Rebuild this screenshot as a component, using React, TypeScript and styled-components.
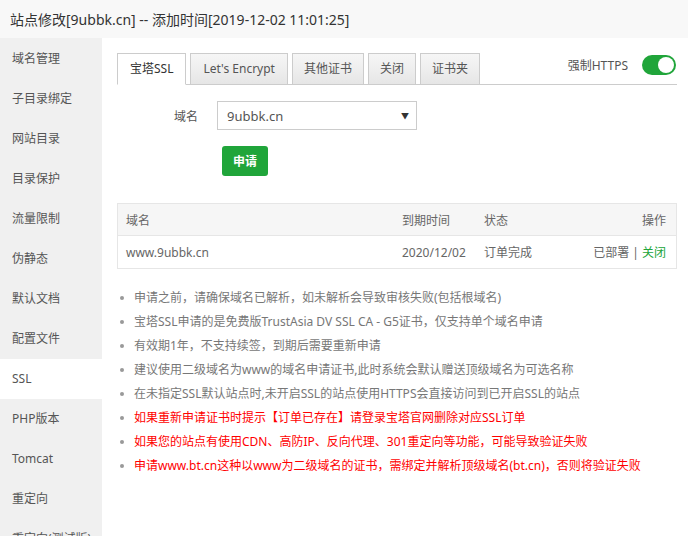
import React from "react";
import styled, { createGlobalStyle } from "styled-components";

const Global = createGlobalStyle`
  html, body { margin: 0; padding: 0; background: #fff; }
  body { font-family: "Segoe UI", "Noto Sans", "Noto Sans CJK SC", sans-serif; }
  * { box-sizing: border-box; }
`;

const Frame = styled.div`
  width: 688px;
  height: 536px;
  overflow: hidden;
  display: flex;
  flex-direction: column;
  background: #fff;
`;

const TitleBar = styled.div`
  height: 38px;
  flex: none;
  background: #f8f8f8;
  color: #333;
  font-size: 14px;
  line-height: 39px;
  padding-left: 10px;
  white-space: nowrap;
`;

const Body = styled.div`
  flex: 1;
  display: flex;
  min-height: 0;
`;

const Sidebar = styled.div`
  width: 102px;
  flex: none;
  background: #f0f0f0;
  display: flex;
  flex-direction: column;
  padding-top: 1px;
`;

const NavItem = styled.div<{ $active?: boolean }>`
  height: 40px;
  flex: none;
  line-height: 40px;
  padding-left: 12px;
  font-size: 12px;
  color: #555;
  white-space: nowrap;
  background: ${(p) => (p.$active ? "#fff" : "transparent")};
`;

const Content = styled.div`
  flex: 1;
  padding: 16px 11px 0 15px;
  display: flex;
  flex-direction: column;
`;

const TabBar = styled.div`
  height: 31px;
  display: flex;
  align-items: flex-end;
  border-bottom: 1px solid #ccc;
`;

const Tab = styled.div<{ $active?: boolean; $w: number }>`
  margin-right: 4px;
  padding: 0 ${(p) => p.$w}px;
  font-size: 12px;
  line-height: 30px;
  color: ${(p) => (p.$active ? "#333" : "#555")};
  border: 1px solid #ccc;
  border-bottom: ${(p) => (p.$active ? "1px solid #fff" : "none")};
  margin-bottom: ${(p) => (p.$active ? "-1px" : "0")};
  height: ${(p) => (p.$active ? "32px" : "31px")};
  background: ${(p) =>
    p.$active ? "#fff" : "linear-gradient(#f6f6f6, #e6e6e6)"};
  white-space: nowrap;
  display: flex;
  justify-content: center;
`;

const Spacer = styled.div`
  flex: 1;
`;

const ForceHttps = styled.div`
  display: flex;
  align-items: center;
  gap: 14px;
  align-self: stretch;
  padding-bottom: 9px;
  font-size: 12px;
  color: #555;
  margin-right: 1px;
`;

const Toggle = styled.div`
  width: 34px;
  height: 20px;
  border-radius: 10px;
  background: #20a53a;
  position: relative;
  &::after {
    content: "";
    position: absolute;
    right: 2px;
    top: 2px;
    width: 16px;
    height: 16px;
    border-radius: 50%;
    background: #fff;
  }
`;

const FormRow = styled.div`
  display: flex;
  align-items: center;
  margin-top: 16px;
`;

const Label = styled.div`
  width: 100px;
  padding-right: 19px;
  text-align: right;
  font-size: 12px;
  color: #555;
`;

const SelectBox = styled.div`
  width: 200px;
  height: 29px;
  border: 1px solid #ccc;
  display: flex;
  align-items: center;
  justify-content: space-between;
  padding: 0 7px 0 9px;
  font-size: 13px;
  color: #555;
`;

const Arrow = styled.span`
  font-size: 8px;
  color: #333;
`;

const ApplyButton = styled.div`
  margin: 16px 0 0 105px;
  width: 46px;
  height: 30px;
  border-radius: 3px;
  background: #20a53a;
  color: #fff;
  font-size: 12px;
  font-weight: bold;
  display: flex;
  align-items: center;
  justify-content: center;
`;

const Table = styled.div`
  margin-top: 27px;
  border: 1px solid #e6e6e6;
  font-size: 12px;
  color: #666;
`;

const Row = styled.div<{ $head?: boolean }>`
  display: grid;
  grid-template-columns: 276px 82px 1fr 1fr;
  height: 32px;
  align-items: center;
  background: ${(p) => (p.$head ? "#f6f6f6" : "#fff")};
  border-bottom: ${(p) => (p.$head ? "1px solid #e6e6e6" : "none")};
`;

const Cell = styled.div<{ $right?: boolean }>`
  padding: ${(p) => (p.$right ? "0 10px 0 0" : "0 0 0 8px")};
  text-align: ${(p) => (p.$right ? "right" : "left")};
  white-space: nowrap;
`;

const Green = styled.span`
  color: #20a53a;
`;

const Notes = styled.ul`
  list-style: none;
  margin: 17px 0 0;
  padding: 0;
`;

const Note = styled.li<{ $red?: boolean }>`
  position: relative;
  padding-left: 17px;
  line-height: 24px;
  font-size: 12px;
  color: ${(p) => (p.$red ? "#f00" : "#777")};
  white-space: nowrap;
  &::before {
    content: "";
    position: absolute;
    left: 3px;
    top: 10px;
    width: 4px;
    height: 4px;
    border-radius: 50%;
    background: #999;
  }
`;

const navItems = [
  "域名管理",
  "子目录绑定",
  "网站目录",
  "目录保护",
  "流量限制",
  "伪静态",
  "默认文档",
  "配置文件",
  "SSL",
  "PHP版本",
  "Tomcat",
  "重定向",
  "重定向(测试版)",
];

const tabs: { name: string; pad: number }[] = [
  { name: "宝塔SSL", pad: 12 },
  { name: "Let's Encrypt", pad: 12 },
  { name: "其他证书", pad: 11 },
  { name: "关闭", pad: 11 },
  { name: "证书夹", pad: 11 },
];

const notes: { text: string; red?: boolean }[] = [
  { text: "申请之前，请确保域名已解析，如未解析会导致审核失败(包括根域名)" },
  { text: "宝塔SSL申请的是免费版TrustAsia DV SSL CA - G5证书，仅支持单个域名申请" },
  { text: "有效期1年，不支持续签，到期后需要重新申请" },
  { text: "建议使用二级域名为www的域名申请证书,此时系统会默认赠送顶级域名为可选名称" },
  { text: "在未指定SSL默认站点时,未开启SSL的站点使用HTTPS会直接访问到已开启SSL的站点" },
  { text: "如果重新申请证书时提示【订单已存在】请登录宝塔官网删除对应SSL订单", red: true },
  { text: "如果您的站点有使用CDN、高防IP、反向代理、301重定向等功能，可能导致验证失败", red: true },
  { text: "申请www.bt.cn这种以www为二级域名的证书，需绑定并解析顶级域名(bt.cn)，否则将验证失败", red: true },
];

export default function App() {
  return (
    <>
      <Global />
      <Frame>
        <TitleBar>站点修改[9ubbk.cn] -- 添加时间[2019-12-02 11:01:25]</TitleBar>
        <Body>
          <Sidebar>
            {navItems.map((n) => (
              <NavItem key={n} $active={n === "SSL"}>
                {n}
              </NavItem>
            ))}
          </Sidebar>
          <Content>
            <TabBar>
              {tabs.map((t, i) => (
                <Tab key={t.name} $active={i === 0} $w={t.pad}>
                  {t.name}
                </Tab>
              ))}
              <Spacer />
              <ForceHttps>
                强制HTTPS
                <Toggle />
              </ForceHttps>
            </TabBar>
            <FormRow>
              <Label>域名</Label>
              <SelectBox>
                9ubbk.cn
                <Arrow>▼</Arrow>
              </SelectBox>
            </FormRow>
            <ApplyButton>申请</ApplyButton>
            <Table>
              <Row $head>
                <Cell>域名</Cell>
                <Cell>到期时间</Cell>
                <Cell>状态</Cell>
                <Cell $right>操作</Cell>
              </Row>
              <Row>
                <Cell>www.9ubbk.cn</Cell>
                <Cell>2020/12/02</Cell>
                <Cell>订单完成</Cell>
                <Cell $right>
                  已部署 | <Green>关闭</Green>
                </Cell>
              </Row>
            </Table>
            <Notes>
              {notes.map((n) => (
                <Note key={n.text} $red={n.red}>
                  {n.text}
                </Note>
              ))}
            </Notes>
          </Content>
        </Body>
      </Frame>
    </>
  );
}
